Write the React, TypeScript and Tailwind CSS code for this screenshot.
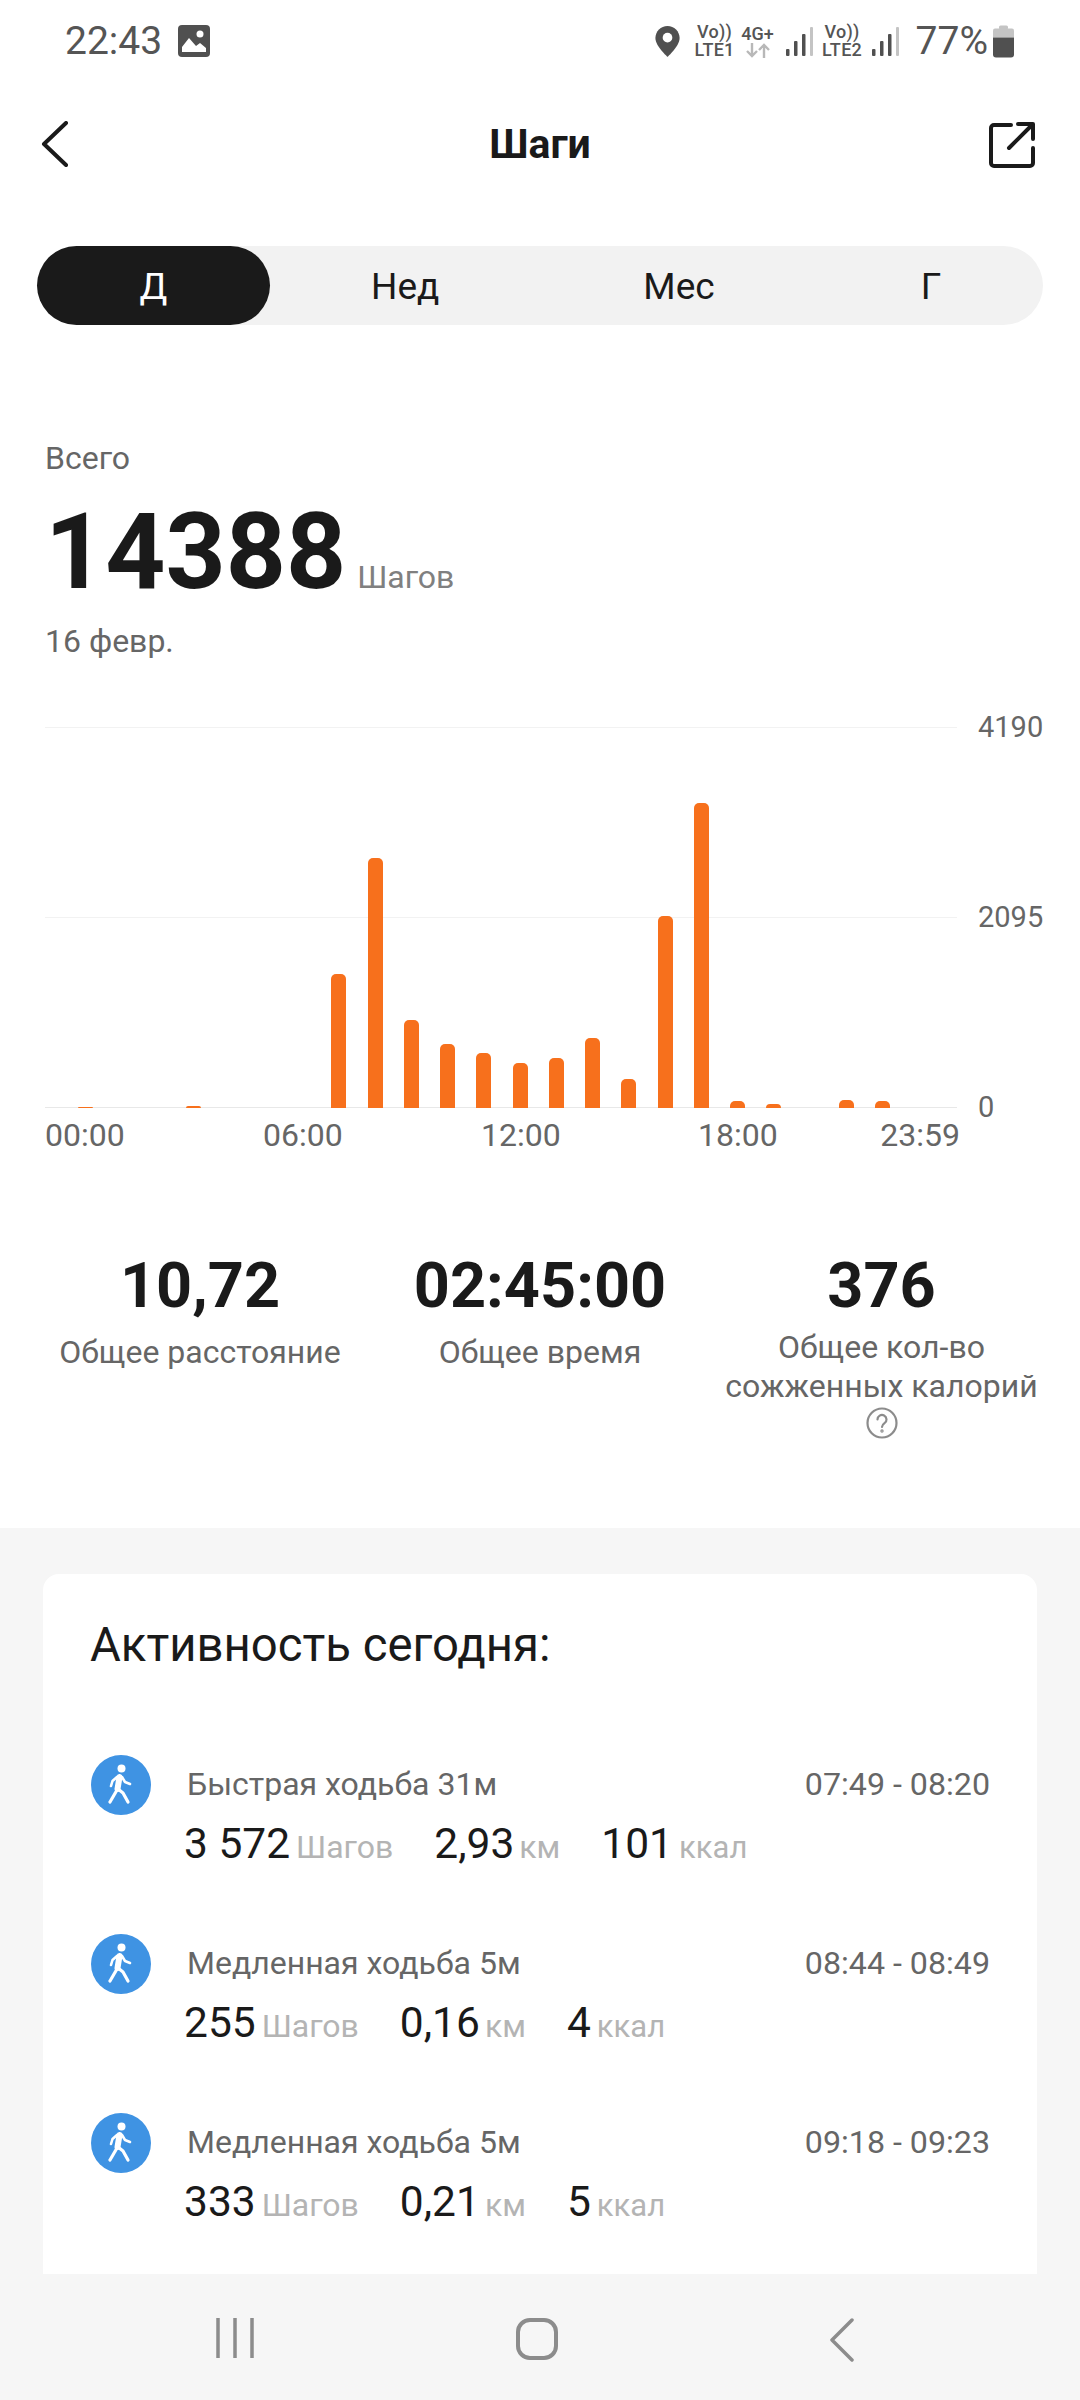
import React from 'react';

const hourlySteps = [1.5, 0, 0, 2, 0, 0, 0, 134, 250, 88, 64, 55, 45, 50, 70, 29, 192, 305, 7, 4, 0, 8, 7, 0];

interface Activity {
  title: string;
  time: string;
  steps: string;
  km: string;
  kcal: string;
}

const activities: Activity[] = [
  { title: 'Быстрая ходьба 31м', time: '07:49 - 08:20', steps: '3 572', km: '2,93', kcal: '101' },
  { title: 'Медленная ходьба 5м', time: '08:44 - 08:49', steps: '255', km: '0,16', kcal: '4' },
  { title: 'Медленная ходьба 5м', time: '09:18 - 09:23', steps: '333', km: '0,21', kcal: '5' },
];

function Signal({ className }: { className?: string }) {
  return (
    <svg width="27" height="29" viewBox="0 0 27 29" className={className}>
      <rect x="0" y="22" width="3.5" height="7" rx="1" fill="#505050" />
      <rect x="8" y="14" width="3.5" height="15" rx="1" fill="#505050" />
      <rect x="16" y="7" width="3.5" height="22" rx="1" fill="#505050" />
      <rect x="24" y="0" width="3" height="29" rx="1" fill="#c4c4c4" />
    </svg>
  );
}

function StatusBar() {
  return (
    <div className="flex h-[80px] shrink-0 items-center justify-between pl-[65px] pr-[66px] pt-[2px] text-[#555555]">
      <div className="flex items-center gap-[16px]">
        <span className="text-[39px] leading-none">22:43</span>
        <svg width="32" height="32" viewBox="0 0 32 32">
          <rect x="0" y="0" width="32" height="32" rx="4" fill="#505050" />
          <circle cx="22" cy="9" r="3.5" fill="#fff" />
          <path d="M4 27v-5l7-9 7 8 4-3 6 5v4z" fill="#fff" />
        </svg>
      </div>
      <div className="flex items-center">
        <svg width="25" height="31" viewBox="0 0 25 32" className="mr-[15px]">
          <path d="M12.5 0C5.6 0 0 5.6 0 12.5 0 21 12.5 32 12.5 32S25 21 25 12.5C25 5.6 19.4 0 12.5 0z" fill="#505050" />
          <circle cx="12.5" cy="12" r="5" fill="#fff" />
        </svg>
        <div className="flex w-[40px] flex-col items-center text-[18px] font-medium leading-[18px] tracking-[0.3px]">
          <span>Vo))</span>
          <span>LTE1</span>
        </div>
        <div className="ml-[7px] flex w-[32px] flex-col items-center text-[18px] font-medium leading-[18px]">
          <span>4G+</span>
          <svg width="24" height="15" viewBox="0 0 24 15" fill="none" stroke="#b8b8b8" strokeWidth="2.4">
            <path d="M6 0v13M1 8l5 5 5-5M18 15V2M13 7l5-5 5 5" />
          </svg>
        </div>
        <Signal className="ml-[12px]" />
        <div className="ml-[9px] flex w-[41px] flex-col items-center text-[18px] font-medium leading-[18px] tracking-[0.3px]">
          <span>Vo))</span>
          <span>LTE2</span>
        </div>
        <Signal className="ml-[9px]" />
        <span className="ml-[17px] text-[39px] leading-none">77%</span>
        <svg width="21" height="33" viewBox="0 0 21 32" className="ml-[5px]">
          <rect x="6" y="0" width="9" height="4" rx="1.5" fill="#c4c4c4" />
          <path d="M2 3h17a2 2 0 0 1 2 2v7H0V5a2 2 0 0 1 2-2z" fill="#c4c4c4" />
          <path d="M0 12h21v17a3 3 0 0 1-3 3H3a3 3 0 0 1-3-3z" fill="#505050" />
        </svg>
      </div>
    </div>
  );
}

function WalkIcon() {
  return (
    <svg width="60" height="60" viewBox="0 0 60 60" className="shrink-0">
      <circle cx="30" cy="30" r="30" fill="#3f93e3" />
      <circle cx="30.5" cy="13.5" r="4" fill="#fff" />
      <g fill="none" stroke="#fff" strokeLinecap="round" strokeLinejoin="round">
        <path d="M28.5 22 26.5 34" strokeWidth="6" />
        <path d="M26 35 19 47" strokeWidth="3.2" />
        <path d="M27 34 32 38 37 47" strokeWidth="3.2" />
        <path d="M31 22 34 27 39 29" strokeWidth="2.6" />
        <path d="M26 22 21.5 26 20 31" strokeWidth="2.6" />
      </g>
    </svg>
  );
}

function ActivityRow({ item }: { item: Activity }) {
  return (
    <div className="flex h-[179px] pl-[48px] pr-[47px]">
      <div className="mt-[-4px]">
        <WalkIcon />
      </div>
      <div className="ml-[34px] flex-1">
        <div className="flex items-center justify-between text-[32px] leading-[50px] text-[#666666]">
          <span className="ml-[2px]">{item.title}</span>
          <span className="text-[32.2px]">{item.time}</span>
        </div>
        <div className="-ml-[1px] mt-[10px] flex items-baseline leading-[50px]">
          <span className="text-[42.5px] text-[#1a1a1a]">{item.steps}</span>
          <span className="ml-[6px] text-[32px] text-[#b4b4b4]">Шагов</span>
          <span className="ml-[41px] text-[42.5px] text-[#1a1a1a]">{item.km}</span>
          <span className="ml-[5px] text-[32px] text-[#b4b4b4]">км</span>
          <span className="ml-[41px] text-[42.5px] text-[#1a1a1a]">{item.kcal}</span>
          <span className="ml-[6px] text-[31px] text-[#b4b4b4]">ккал</span>
        </div>
      </div>
    </div>
  );
}

export default function App() {
  return (
    <div className="flex h-[2400px] w-[1080px] flex-col overflow-hidden bg-white font-['Roboto',sans-serif]">
      <StatusBar />

      <div className="relative mt-[20px] flex h-[90px] shrink-0 items-center justify-center">
        <svg width="28" height="46" viewBox="0 0 28 46" className="absolute left-[41px] top-[21px]" fill="none" stroke="#1a1a1a" strokeWidth="4" strokeLinecap="round" strokeLinejoin="round">
          <path d="M25 2 3 23l22 21" />
        </svg>
        <span className="text-[41px] font-bold text-[#1a1a1a]">Шаги</span>
        <svg width="46" height="46" viewBox="0 0 46 46" className="absolute left-[989px] top-[22px]" fill="none" stroke="#1a1a1a" strokeWidth="4" strokeLinecap="round" strokeLinejoin="round">
          <path d="M22 3H5a3 3 0 0 0-3 3v35a3 3 0 0 0 3 3h36a3 3 0 0 0 3-3V26" />
          <path d="M20 26 43 3M29 2h15v15" />
        </svg>
      </div>

      <div className="mx-[37px] mt-[56px] flex h-[79px] shrink-0 items-center rounded-full bg-[#f2f2f2] pt-[3px] text-[37px] text-[#1a1a1a]">
        <div className="-mt-[3px] flex h-[79px] w-[233px] items-center justify-center rounded-full bg-[#1a1a1a] pt-[3px] text-white">Д</div>
        <div className="ml-[101px]">Нед</div>
        <div className="ml-[204px]">Мес</div>
        <div className="ml-[206px]">Г</div>
      </div>

      <div className="ml-[45px] mt-[113px] h-[40px] shrink-0 text-[32px] leading-[40px] text-[#666666]">Всего</div>
      <div className="ml-[45px] mt-[15px] flex h-[120px] shrink-0 items-baseline leading-[120px]">
        <span className="text-[105px] font-bold text-[#1a1a1a]">14388</span>
        <span className="ml-[11px] text-[32px] text-[#808080]">Шагов</span>
      </div>
      <div className="ml-[45px] mt-[8px] h-[40px] shrink-0 text-[32px] leading-[40px] text-[#666666]">16 февр.</div>

      <div className="mt-[66px] flex h-[381px] shrink-0 pl-[45px]">
        <div className="relative h-full w-[912px]">
          <div className="absolute inset-0 flex flex-col justify-between">
            <div className="h-[1px] bg-[#f2f2f2]" />
            <div className="h-[1px] bg-[#f2f2f2]" />
            <div className="h-[1px] bg-[#e8e8e8]" />
          </div>
          <div className="relative flex h-full items-end pl-[22px]">
            {hourlySteps.map((h, i) => (
              <div key={i} className="flex w-[36.25px] justify-center">
                <div className="w-[15px] rounded-t-[5px] bg-[#f7701c]" style={{ height: h }} />
              </div>
            ))}
          </div>
        </div>
        <div className="ml-[21px] flex h-full flex-col justify-between pt-[1px] text-[29px] text-[#666666]">
          <div className="flex h-0 items-center">4190</div>
          <div className="flex h-0 items-center">2095</div>
          <div className="flex h-0 items-center">0</div>
        </div>
      </div>
      <div className="mt-[7px] flex h-[40px] w-[960px] shrink-0 pl-[45px] text-[32px] leading-[40px] text-[#666666]">
        <span className="w-[218px]">00:00</span>
        <span className="w-[218px]">06:00</span>
        <span className="w-[217px]">12:00</span>
        <span className="w-[180px]">18:00</span>
        <span className="flex-1 text-right">23:59</span>
      </div>

      <div className="mt-[96px] grid h-[277px] shrink-0 grid-cols-[310px_340px_313px] gap-x-[15px] pl-[45px] text-center">
        <div>
          <div className="text-[63px] font-bold leading-[70px] text-[#1a1a1a]">10,72</div>
          <div className="mt-[12px] text-[32px] leading-[38px] text-[#666666]">Общее расстояние</div>
        </div>
        <div>
          <div className="text-[63px] font-bold leading-[70px] text-[#1a1a1a]">02:45:00</div>
          <div className="mt-[12px] text-[32px] leading-[38px] text-[#666666]">Общее время</div>
        </div>
        <div className="flex flex-col items-center">
          <div className="text-[63px] font-bold leading-[70px] text-[#1a1a1a]">376</div>
          <div className="mt-[7px] whitespace-nowrap text-[32px] leading-[38.5px] text-[#666666]">Общее кол-во<br />сожженных калорий</div>
          <svg width="32" height="32" viewBox="0 0 32 32" className="mt-[2px]" fill="none" stroke="#8c8c8c" strokeWidth="2.2">
            <circle cx="16" cy="16" r="14.5" />
            <path d="M11.5 12.5a4.5 4.5 0 1 1 7 3.7c-1.6 1.1-2.5 1.9-2.5 3.8" strokeLinecap="round" />
            <circle cx="16" cy="24" r="0.6" />
          </svg>
        </div>
      </div>

      <div className="flex-1 overflow-hidden bg-[#f6f6f6] px-[43px] pt-[46px]">
        <div className="h-full rounded-t-[16px] bg-white">
          <div className="pl-[47px] pt-[45px] text-[47.3px] leading-[52px] text-[#1a1a1a]">Активность сегодня:</div>
          <div className="mt-[88px]">
            {activities.map((a, i) => (
              <ActivityRow key={i} item={a} />
            ))}
          </div>
        </div>
      </div>

      <div className="flex h-[126px] shrink-0 items-start bg-[#f6f6f6] pt-[44px]">
        <svg width="38" height="40" viewBox="0 0 38 40" className="ml-[216px]" fill="none" stroke="#8c8c8c" strokeWidth="3.5">
          <path d="M2 0v40M19 0v40M36 0v40" />
        </svg>
        <svg width="42" height="42" viewBox="0 0 42 42" className="ml-[262px]" fill="none" stroke="#8c8c8c" strokeWidth="4">
          <rect x="2" y="2" width="38" height="38" rx="12" />
        </svg>
        <svg width="24" height="44" viewBox="0 0 24 44" className="ml-[272px]" fill="none" stroke="#8c8c8c" strokeWidth="3.5" strokeLinecap="round" strokeLinejoin="round">
          <path d="M22 2 2 22l20 20" />
        </svg>
      </div>
    </div>
  );
}
